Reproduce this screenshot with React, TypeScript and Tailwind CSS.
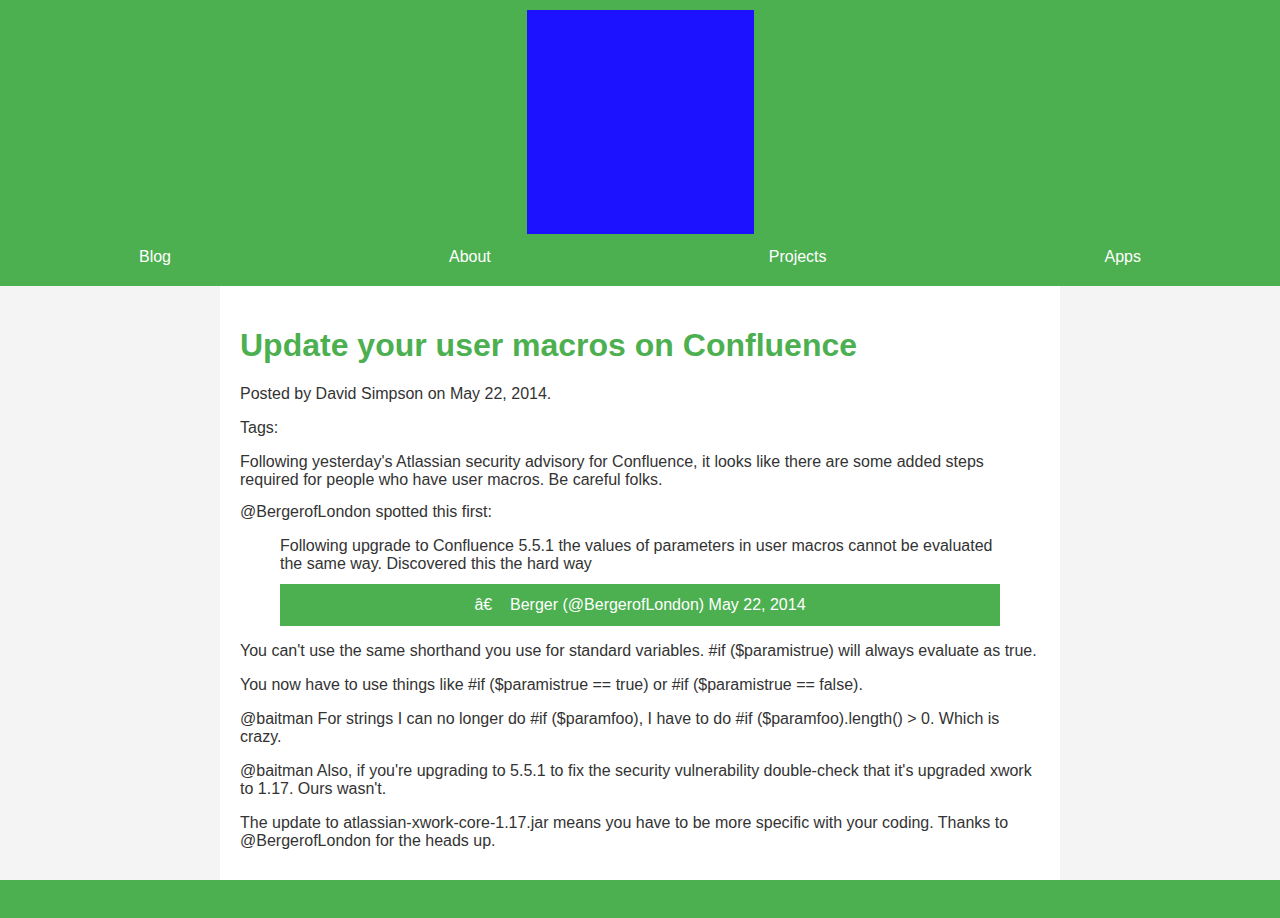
export default function App() {
  const navItems = ["Blog", "About", "Projects", "Apps"]

  return (
    <div className="min-h-screen bg-[#f4f4f4] text-[16px] leading-[normal] text-[#333333] font-['Liberation_Sans',Arial,sans-serif]">
      <header className="bg-[#4caf50] pt-[10px]">
        <div className="mx-auto h-[224px] w-[227px] bg-[#1c12ff]" />
        <nav className="flex justify-around pt-[14px] pb-[20px] text-white">
          {navItems.map((item) => (
            <a key={item} href="#" className="block">
              {item}
            </a>
          ))}
        </nav>
      </header>

      <main className="mx-auto w-[840px] bg-white px-[20px] pt-[20px] pb-[14px] [&_p]:my-[16px]">
        <h1 className="my-[21px] text-[32px] font-bold leading-[normal] text-[#4caf50]">
          Update your user macros on Confluence
        </h1>
        <p>Posted by David Simpson on May 22, 2014.</p>
        <p>Tags:</p>
        <p className="!mb-[14px]">
          Following yesterday's Atlassian security advisory for Confluence, it looks like there are some added steps
          required for people who have user macros. Be careful folks.
        </p>
        <p className="!mt-[14px]">@BergerofLondon spotted this first:</p>
        <blockquote className="mx-[40px] my-[16px]">
          <p className="!my-0">
            Following upgrade to Confluence 5.5.1 the values of parameters in user macros cannot be evaluated the same
            way. Discovered this the hard way
          </p>
          <div className="mt-[11px] bg-[#4caf50] py-[12px] text-center text-white">
            â€&nbsp;&nbsp;&nbsp;&nbsp;Berger (@BergerofLondon) May 22, 2014
          </div>
        </blockquote>
        <p>You can't use the same shorthand you use for standard variables. #if ($paramistrue) will always evaluate as true.</p>
        <p>You now have to use things like #if ($paramistrue == true) or #if ($paramistrue == false).</p>
        <p>
          @baitman For strings I can no longer do #if ($paramfoo), I have to do #if ($paramfoo).length() &gt; 0. Which is
          crazy.
        </p>
        <p>
          @baitman Also, if you're upgrading to 5.5.1 to fix the security vulnerability double-check that it's upgraded
          xwork to 1.17. Ours wasn't.
        </p>
        <p>
          The update to atlassian-xwork-core-1.17.jar means you have to be more specific with your coding. Thanks to
          @BergerofLondon for the heads up.
        </p>
      </main>

      <footer className="h-[38px] bg-[#4caf50]" />
    </div>
  )
}
